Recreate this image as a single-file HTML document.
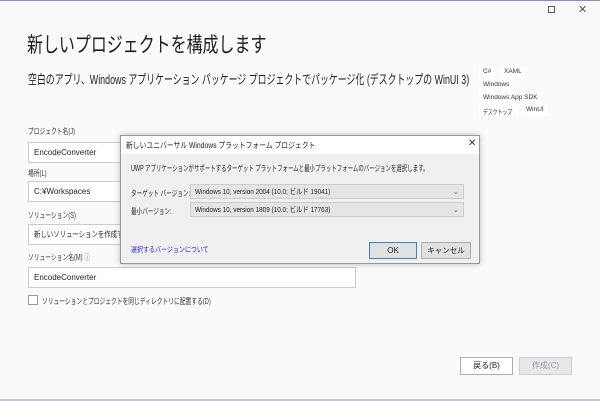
<!DOCTYPE html>
<html><head><meta charset="utf-8"><style>
*{margin:0;padding:0;box-sizing:border-box}
body{width:600px;height:401px;overflow:hidden;background:#fafafa;font-family:"Liberation Sans","Noto Sans CJK JP",sans-serif;color:#1e1e1e;position:relative}
.a{position:absolute;white-space:nowrap}
.n{transform-origin:0 0;display:inline-block}
.inp{position:absolute;background:#fff;border:1px solid #ccc;font-size:8px;padding-left:5px;line-height:19px;overflow:hidden;white-space:nowrap}
.tag{position:absolute;background:#fff;font-size:6.5px;padding:1px 4px;color:#333;white-space:nowrap;height:11px}
.lbl{font-size:8px;color:#333;transform:scaleX(.72);transform-origin:0 0}
</style></head><body>
<div class="a" style="left:0;top:0;width:600px;height:1px;background:#8b8bc0"></div>
<div class="a" style="left:0;top:399px;width:600px;height:2px;background:#c8c8d8"></div>
<div class="a" style="left:548px;top:6px;width:7px;height:7px;border:1px solid #555"></div>
<div class="a" style="left:578px;top:3px;font-size:11px;color:#555">✕</div>
<div class="a" style="left:27px;top:29px;font-size:21px;transform:scaleX(.76);transform-origin:0 0">新しいプロジェクトを構成します</div>
<div class="a" style="left:28px;top:69px;font-size:13px;transform:scaleX(.685);transform-origin:0 0">空白のアプリ、Windows アプリケーション パッケージ プロジェクトでパッケージ化 (デスクトップの WinUI 3)</div>
<div class="tag" style="left:479px;top:67px">C#</div>
<div class="tag" style="left:500px;top:67px">XAML</div>
<div class="tag" style="left:479px;top:80px">Windows</div>
<div class="tag" style="left:479px;top:93px">Windows App SDK</div>
<div class="tag" style="left:479px;top:105px;width:40px;overflow:hidden"><span class="n" style="transform:scaleX(.75)">デスクトップ</span></div>
<div class="tag" style="left:522px;top:105px">WinUI</div>
<div class="a lbl" style="left:28px;top:126px">プロジェクト名(J)</div>
<div class="inp" style="left:28px;top:142px;width:328px;height:21px">EncodeConverter</div>
<div class="a lbl" style="left:28px;top:168px">場所(L)</div>
<div class="inp" style="left:28px;top:181px;width:328px;height:21px">C:¥Workspaces</div>
<div class="a lbl" style="left:28px;top:210px">ソリューション(S)</div>
<div class="inp" style="left:28px;top:224px;width:328px;height:21px"><span class="n" style="transform:scaleX(.8)">新しいソリューションを作成する</span></div>
<div class="a lbl" style="left:28px;top:252px">ソリューション名(M) <span style="color:#1a7fc0">ⓘ</span></div>
<div class="inp" style="left:28px;top:267px;width:328px;height:21px">EncodeConverter</div>
<div class="a" style="left:28px;top:295px;width:10px;height:10px;border:1px solid #999;background:#fff"></div>
<div class="a lbl" style="left:42px;top:296px">ソリューションとプロジェクトを同じディレクトリに配置する(D)</div>
<div class="a" style="left:460px;top:357px;width:53px;height:18px;border:1px solid #aab;background:#fff;font-size:8px;text-align:center;line-height:16px">戻る(B)</div>
<div class="a" style="left:519px;top:357px;width:53px;height:18px;border:1px solid #ccd;background:#e8e8ec;font-size:8px;color:#999;text-align:center;line-height:16px">作成(C)</div>
<div class="a" style="left:120px;top:135px;width:360px;height:129px;background:#f0f0f0;border:1px solid #999;box-shadow:0 0 6px rgba(0,0,0,.25)">
 <div style="position:absolute;left:0;top:0;width:358px;height:18px;background:#fff"></div>
 <div class="a" style="left:5px;top:4px;font-size:8px;transform:scaleX(.85);transform-origin:0 0">新しいユニバーサル Windows プラットフォーム プロジェクト</div>
 <div class="a" style="left:347px;top:2px;font-size:10px;color:#333">✕</div>
 <div class="a" style="left:10px;top:27px;font-size:8px;transform:scaleX(.68);transform-origin:0 0">UWP アプリケーションがサポートするターゲット プラットフォームと最小プラットフォームのバージョンを選択します。</div>
 <div class="a" style="left:10px;top:52px;font-size:8px;transform:scaleX(.7);transform-origin:0 0">ターゲット バージョン:</div>
 <div class="a" style="left:69px;top:48px;width:274px;height:15px;background:#e5e5e5;border:1px solid #ccc;font-size:7.5px;padding-left:4px;line-height:13px"><span class="n" style="transform:scaleX(.85)">Windows 10, version 2004 (10.0; ビルド 19041)</span><span style="position:absolute;right:4px;color:#666">⌄</span></div>
 <div class="a" style="left:10px;top:70px;font-size:8px;transform:scaleX(.7);transform-origin:0 0">最小バージョン:</div>
 <div class="a" style="left:69px;top:66px;width:274px;height:15px;background:#e5e5e5;border:1px solid #ccc;font-size:7.5px;padding-left:4px;line-height:13px"><span class="n" style="transform:scaleX(.85)">Windows 10, version 1809 (10.0; ビルド 17763)</span><span style="position:absolute;right:4px;color:#666">⌄</span></div>
 <div class="a" style="left:10px;top:108px;font-size:7.5px;color:#2a2ad0;transform:scaleX(.8);transform-origin:0 0">選択するバージョンについて</div>
 <div class="a" style="left:248px;top:106px;width:48px;height:17px;border:1px solid #3a7fd8;background:#e1e1e1;font-size:8px;text-align:center;line-height:15px">OK</div>
 <div class="a" style="left:300px;top:106px;width:50px;height:17px;border:1px solid #adadad;background:#e1e1e1;font-size:7.5px;text-align:center;line-height:15px">キャンセル</div>
</div>
</body></html>
